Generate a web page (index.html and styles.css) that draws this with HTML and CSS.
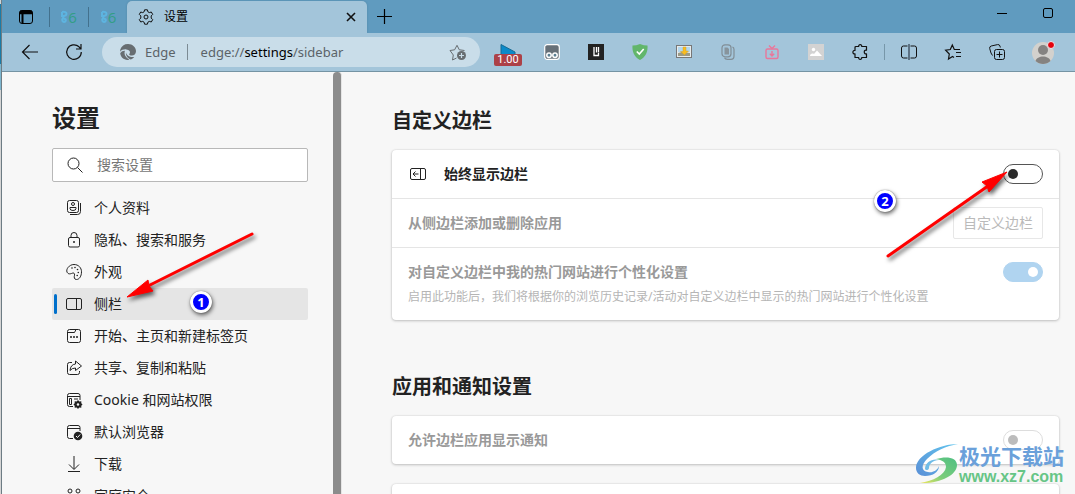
FILE: index.html
```html
<!DOCTYPE html>
<html lang="zh-CN">
<head>
<meta charset="utf-8">
<title>设置</title>
<link rel="stylesheet" href="styles.css">
</head>
<body>
<div class="edge"></div>
<div class="window">
  <header class="tabstrip">
    <button class="tab-actions" aria-label="标签操作"><svg class="i16" viewBox="0 0 16 16"><rect x="1.5" y="1.5" width="13" height="13" rx="2.5"/><path d="M1.5 3.5h13M2 2.5h12M4.5 5v9" stroke-width="2"/><path d="M2 4.5h12" stroke-width="1.5"/></svg></button>
    <button class="pinned" aria-label="固定标签 1"><svg width="7" height="12" viewBox="0 0 7 12"><path d="M1 1v5M1 1c6-1 6 4 0 4M2 7c-2 2 0 4 1 4s3-2 1-3-3 0-1-2"/></svg><span>6</span></button>
    <button class="pinned" aria-label="固定标签 2"><svg width="7" height="12" viewBox="0 0 7 12"><path d="M1 1v5M1 1c6-1 6 4 0 4M2 7c-2 2 0 4 1 4s3-2 1-3-3 0-1-2"/></svg><span>6</span></button>
    <div class="tab">
      <svg class="i16" viewBox="0 0 16 16"><path d="M6.6.8h2.8l.5 2 1.4.8 2-.6 1.4 2.4-1.5 1.5v2.2l1.5 1.5-1.4 2.4-2-.6-1.4.8-.5 2H6.6l-.5-2-1.4-.8-2 .6-1.4-2.4 1.5-1.5V6.900L1.300 5.400 2.700 3l2 .6 1.400-.8z" stroke-linejoin="round"/><circle cx="8" cy="8" r="2"/></svg>
      <span class="tab-title">设置</span>
      <button class="tab-close" aria-label="关闭标签"><svg width="10" height="10" viewBox="0 0 10 10"><path d="M1 1l8 8M9 1L1 9" stroke-width="1.6"/></svg></button>
    </div>
    <button class="new-tab" aria-label="新建标签"><svg width="15" height="15" viewBox="0 0 15 15"><path d="M7.500 0v15M0 7.500h15" stroke-width="1.200"/></svg></button>
    <div class="win-controls">
      <button aria-label="最小化"><svg width="10" height="10" viewBox="0 0 10 10"><path d="M0 5.500h10"/></svg></button>
      <button aria-label="最大化"><svg width="10" height="10" viewBox="0 0 10 10"><rect x=".5" y=".5" width="9" height="9" rx="1.500"/></svg></button>
    </div>
  </header>

  <div class="toolbar">
    <button class="tool" aria-label="后退"><svg class="i16" viewBox="0 0 16 16"><path d="M.5 8H16M7.500 1L.5 8l7 7" stroke-width="1.200"/></svg></button>
    <button class="tool" aria-label="刷新"><svg class="i16" viewBox="0 0 16 16"><path d="M15.300 8A7.300 7.300 0 1 1 13 2.800L14.500 4.500M15 0v5h-5" stroke-width="1.200"/></svg></button>
    <div class="address">
      <svg class="i16" viewBox="0 0 16 16"><g class="solid grey"><path d="M.3 5.500C1.400 2 4.300 0 8 0c4.600 0 8 3.400 8 7.300 0 2.600-1.900 4.300-4.200 4.300-2 0-3-.8-2.500-1.600 1.800-2.300-.1-4.500-3-4.600C3.700 5.200 1.500 6 .1 7.800z"/><path d="M.2 9.300c.9-1.700 2.600-2.500 4.800-2.500-1.200 2.500-.2 6.200 4.300 8.900C4.500 16.800.6 13.500.2 9.300z"/><path d="M6 8.600c.5 3 3.800 5 8.200 4.400-1.200 1.500-2.700 2.400-3.500 2.500C7.500 14.400 5.400 11.300 6 8.600z"/></g></svg>
      <span class="origin">Edge</span>
      <span class="url">edge://<b>settings</b>/sidebar</span>
      <button class="fav" aria-label="添加到收藏夹"><svg width="18" height="18" viewBox="0 0 18 18"><path class="grey-line" d="M7.500 15l-4 2 .8-5L1 7.500l4.600-.7L8 2.300l2.300 4.500 5.200.7"/><circle class="solid grey" cx="12.500" cy="12.500" r="4.500"/><path class="pale-line" d="M12.500 10v5M10 12.500h5" stroke-width="1.200"/></svg></button>
    </div>
    <div class="tools">
      <button class="tool speed" aria-label="视频速度"><svg width="16" height="12" viewBox="0 0 16 12"><path d="M1 .5L15 8v4H1z" fill="#0b8ac9" stroke="#176b93"/></svg><span>1.00</span></button>
      <button class="tool" aria-label="脚本管理器"><svg class="i16" viewBox="0 0 16 16"><rect x=".7" y=".7" width="14.600" height="14.600" rx="2.500" fill="#667078" stroke="#fff" stroke-width="1.200"/><g fill="#5b7f92" stroke="#fff" stroke-width="1.500"><circle cx="5" cy="11.300" r="2.200"/><circle cx="11" cy="11.300" r="2.200"/></g></svg></button>
      <button class="tool" aria-label="阅读列表"><svg class="i16" viewBox="0 0 16 16"><rect width="16" height="16" fill="#222" stroke="none"/><path d="M6 3v8.500h4.500V9M8.500 3v5.500M10.500 3v5.500" stroke="#fff" stroke-width="1.300"/></svg></button>
      <button class="tool" aria-label="广告防护"><svg class="i16" viewBox="0 0 16 16"><path d="M8 0c2.500 1 5 1.500 7.500 1.500C16 7 14 13 8 16 2 13 0 7 .5 1.500 3 1.500 5.500 1 8 0z" fill="#62b66b" stroke="none"/><path d="M4.800 7.500L7.300 10l4.400-5" stroke="#fff" stroke-width="1.600"/></svg></button>
      <button class="tool" aria-label="图片下载"><svg class="i16" viewBox="0 0 16 16"><rect x=".5" y="1.500" width="15" height="12" fill="#e8ecec" stroke="#777"/><path d="M2 3h12v5H2z" fill="#b4d8ee" stroke="none"/><path d="M2 12V9l4-1 8 1v3z" fill="#9b9a86" stroke="none"/><path d="M7 3h3v4h2.500L8.500 11 4.500 7.500H7z" fill="#f9bd20" stroke="#c99a27" stroke-width=".4"/></svg></button>
      <button class="tool" aria-label="复制"><svg class="i16" viewBox="0 0 16 16"><g stroke="#818e96" stroke-width="1.200"><rect x="2" y=".8" width="9" height="12" rx="3"/><path d="M12.500 3c1.200.4 1.500 1.200 1.500 2.500V12c0 2-1 3.300-3 3.300H7.500c-1.500 0-2.500-.4-3-1.500"/></g><path d="M4.500 3.500h3l1.500 1.500v5.500H4.500z" fill="#87949c" stroke="none"/></svg></button>
      <button class="tool" aria-label="视频下载"><svg class="i16" viewBox="0 0 16 16"><g stroke="#e9779b" stroke-width="1.400"><rect x="2" y="5" width="12" height="9.500" rx="1.500"/><path d="M5 1.500L8 4.500l3-3M8 7v5M5.800 9.800L8 12l2.200-2.200"/></g></svg></button>
      <button class="tool" aria-label="图片"><svg class="i16" viewBox="0 0 16 16"><rect width="16" height="16" fill="#d3d3d3" stroke="none"/><circle cx="5.500" cy="5.500" r="1.700" fill="#fff" stroke="none"/><path d="M2 12c0-2 2-3 4-2l3-3.500 5 5.500z" fill="#fff" stroke="none"/></svg></button>
      <button class="tool" aria-label="扩展"><svg class="i16" viewBox="0 0 16 16"><path d="M4 2.500h2.700c-.6-2.600 3.600-2.600 3 0H14.500v3.700c-3-.8-3 4.400 0 3.600v3.700H9.700c.6 2.600-3.600 2.600-3 0H3V9.800C.2 10.400.2 5.900 3 6.400V3.500q0-1 1-1z" stroke-width="1.200" stroke-linejoin="round"/></svg></button>
      <span class="divider"></span>
      <button class="tool" aria-label="拆分屏幕"><svg class="i16" viewBox="0 0 16 16"><path d="M6.500 2h-4Q.5 2 .5 4v8q0 2 2 2h4M9.500 2h4q2 0 2 2v8q0 2-2 2h-4"/><path d="M8 0v16" stroke="#456" stroke-width="1.500"/></svg></button>
      <button class="tool" aria-label="收藏夹"><svg class="i16" viewBox="0 0 16 16"><path d="M9 13.500l-1.500-1L3.500 15l.8-5L.6 6.200l4.700-.7L7.300 1l2 4.500H15M11 8.500h5M11 12.500h5" stroke-width="1.200"/></svg></button>
      <button class="tool" aria-label="集锦"><svg class="i16" viewBox="0 0 16 16"><rect x="5.500" y="5.500" width="10" height="10" rx="2"/><path d="M3.500 11.500L2 9 .7 4.500Q.3 2.500 2.200 2L8.500.6q2-.4 2.500 1.500l.3 1.400M10.500 7.500v6M7.500 10.500h6"/></svg></button>
      <button class="tool avatar" aria-label="个人资料"><svg width="22" height="24" viewBox="0 0 22 24"><circle cx="11" cy="13" r="11" fill="#d3d1cd" stroke="none"/><circle cx="11" cy="10" r="5" fill="#858381" stroke="none"/><path d="M3.500 21c1.500-6 13.500-6 15 0-4 4-11 4-15 0z" fill="#858381" stroke="none"/><circle cx="19" cy="5" r="3.500" fill="#e5000b" stroke="#e5edf2"/></svg></button>
    </div>
  </div>

  <div class="page">
    <aside class="sidebar">
      <h1>设置</h1>
      <label class="search"><svg class="i16" viewBox="0 0 16 16"><circle cx="6.500" cy="6.500" r="5.500"/><path d="M10.500 10.500L15.500 15.500"/></svg><input type="search" placeholder="搜索设置" aria-label="搜索设置"></label>
      <nav>
        <a href="#profile"><svg class="i16" viewBox="0 0 16 16"><rect x="1.500" y=".5" width="11" height="12" rx="2"/><circle cx="7" cy="4" r="1.500"/><path d="M4 7.500h6v1q0 2-3 2t-3-2zM14.500 3v8.500q0 3-3 3H4"/></svg>个人资料</a>
        <a href="#privacy"><svg class="i16" viewBox="0 0 16 16"><rect x="2.500" y="5.500" width="11" height="9.500" rx="1.500"/><path d="M5 5.500v-2Q5 .5 8 .5t3 3v2"/><circle class="solid" cx="8" cy="10" r="1"/></svg>隐私、搜索和服务</a>
        <a href="#appearance"><svg class="i16" viewBox="0 0 16 16"><path d="M1 8C-.2 5.500 3 .5 8 .5c4.500 0 7.500 3.300 7.500 7.300 0 4.400-2.200 7.700-5 7.700-2.400 0-2.600-2.300-2-4.300.4-1.700-.8-2.700-2.300-2C4.500 10 2 10.500 1 8z"/><g class="solid"><circle cx="6" cy="4" r=".8"/><circle cx="9" cy="3.500" r=".8"/><circle cx="11.500" cy="5.500" r=".8"/><circle cx="12.300" cy="8.500" r=".8"/><circle cx="11.200" cy="11.500" r=".8"/></g></svg>外观</a>
        <a href="#sidebar" class="current" aria-current="page"><svg class="i16" viewBox="0 0 16 16"><rect x=".5" y="2.500" width="15" height="11" rx="1.500"/><path d="M10.500 2.500v11"/></svg>侧栏</a>
        <a href="#start"><svg class="i16" viewBox="0 0 16 16"><rect x="1.500" y="1.500" width="13" height="13" rx="2"/><path d="M1.500 4.500h7l1.500-3"/><path d="M4 9h2M7 9h2M10 9h2" stroke-width="1.500"/></svg>开始、主页和新建标签页</a>
        <a href="#share"><svg class="i16" viewBox="0 0 16 16"><path d="M6 2.500H3.500q-2 0-2 2v8q0 2 2 2h8q2 0 2-2V11"/><path d="M9.500 1l6 5-6 4.500V8Q6 8 4 10.500q.5-6 5.500-6.500z" stroke-linejoin="round"/></svg>共享、复制和粘贴</a>
        <a href="#cookies"><svg class="i16" viewBox="0 0 16 16"><path d="M7 14.500H3.500q-2 0-2-2v-9q0-2 2-2h8.500q2 0 2 2V8M1.500 4.500H14M3.500 6.500h2v6h-2zM8 7h4"/><path class="solid" d="M12 8l1.300 1.400 2-.2v2.100l1.200 1.200-1.200 1.200v2l-2-.2L12 17l-1.300-1.500-2 .2v-2l-1.200-1.200 1.200-1.200V9.200l2 .2z"/><circle cx="12" cy="12.500" r="1.200" fill="#f7f7f7" stroke="none"/></svg>Cookie 和网站权限</a>
        <a href="#default"><svg class="i16" viewBox="0 0 16 16"><path d="M7 14.500H3.500q-2 0-2-2v-9q0-2 2-2h8.500q2 0 2 2V7M1.500 4.500H14"/><circle class="solid" cx="12" cy="12" r="4.300"/><path d="M10 12l1.500 1.500 2.700-3" stroke="#f7f7f7"/></svg>默认浏览器</a>
        <a href="#downloads"><svg class="i16" viewBox="0 0 16 16"><path d="M8 0v13M3 8.500L8 13.500l5-5M2 15.500h12"/></svg>下载</a>
        <a href="#family"><svg class="i16" viewBox="0 0 16 16"><circle cx="4" cy="3" r="2"/><circle cx="12" cy="3" r="2"/><circle cx="8" cy="9" r="1.800"/><path d="M.5 11V8q0-1.500 1.500-1.500h3M15.500 11V8q0-1.500-1.500-1.500h-3M4 15q0-3 4-3t4 3"/></svg>家庭安全</a>
      </nav>
    </aside>
    <div class="scrollbar"></div>

    <main>
      <h2>自定义边栏</h2>
      <section class="card">
        <div class="row">
          <svg class="row-icon" width="20" height="20" viewBox="0 0 20 20"><rect x="2.500" y="4.500" width="15" height="11" rx="1.500"/><path d="M12.500 4.500v11M10.500 10H5M7.500 7.500L5 10l2.500 2.500"/></svg>
          <label for="always">始终显示边栏</label>
          <input class="switch" id="always" type="checkbox">
        </div>
        <div class="row muted">
          <span class="label">从侧边栏添加或删除应用</span>
          <button class="outline" disabled>自定义边栏</button>
        </div>
        <div class="row tall muted">
          <div class="text"><label for="personal">对自定义边栏中我的热门网站进行个性化设置</label><p>启用此功能后，我们将根据你的浏览历史记录/活动对自定义边栏中显示的热门网站进行个性化设置</p></div>
          <input class="switch" id="personal" type="checkbox" checked disabled>
        </div>
      </section>
      <h2>应用和通知设置</h2>
      <section class="card">
        <div class="row muted">
          <label for="notify">允许边栏应用显示通知</label>
          <input class="switch" id="notify" type="checkbox" disabled>
        </div>
      </section>
      <section class="card"><div class="row"></div></section>
    </main>
  </div>
</div>

<svg class="arrow arrow-one" width="140" height="80" viewBox="0 0 140 80"><path class="shaft" d="M132 14L30 65"/><path class="head" d="M7 77L28 60 29 66 33 71z"/></svg>
<span class="step step-one">1</span>
<svg class="arrow arrow-two" width="140" height="100" viewBox="0 0 140 100"><path class="shaft" d="M8 95L108 25"/><path class="head" d="M127 11L102 21 107 25 109 31z"/></svg>
<span class="step step-two">2</span>

<div class="watermark">
  <svg width="44" height="42" viewBox="0 0 44 42">
    <defs>
      <linearGradient id="sky" x1="1" y1="0" x2="0" y2="1"><stop offset="0" stop-color="#62c5ee"/><stop offset="1" stop-color="#5a8fd6"/></linearGradient>
      <linearGradient id="leaf" x1="1" y1="0" x2="0" y2="1"><stop offset="0" stop-color="#4fbf83"/><stop offset=".6" stop-color="#7ccd7b"/><stop offset="1" stop-color="#f3e85c"/></linearGradient>
    </defs>
    <path d="M43 1C25 1 1 12 1 25c0 5 4 8 9 8 8 0 14-4 14-10-2 5-7 7-11 6-7-1-7-7-1-13C20 8 31 3 43 1z" fill="url(#sky)"/>
    <path d="M10 26c0-7 8-11 14-9-6 0-10 4-10 8 0 2-3 3-4 1z" fill="#70bce7"/>
    <path d="M21 16c10-3 21-2 21 6 0 10-17 19-37 18 13-2 25-8 26-16 0-5-4-7-10-8z" fill="url(#leaf)"/>
  </svg>
  <div class="mark-text"><strong>极光下载站</strong><span>www.xz7.com</span></div>
</div>
</body>
</html>
```

FILE: styles.css
```css
* { box-sizing: border-box; }
body {
  margin: 0;
  height: 100vh;
  display: flex;
  position: relative;
  overflow: hidden;
  background: #f7f7f7;
  color: #222;
  font: 14px/20px "Noto Sans", "Noto Sans CJK SC", sans-serif;
}
h1, h2, p { margin: 0; }
button { margin: 0; padding: 0; border: 0; background: none; color: inherit; font: inherit; }
svg { flex: none; fill: none; stroke: currentColor; overflow: visible; }
.i16 { width: 16px; height: 16px; }
.solid { fill: currentColor; stroke: none; }
.grey { fill: #676d71; }
.grey-line { stroke: #676d71; }
.pale-line { stroke: #c9dde9; }

.edge {
  flex: none;
  width: 2px;
  border-right: 1px solid #6d7c84;
  background: linear-gradient(#cfd5d8 4px, #197ba7 4px 64px, #7db6cf 64px 90px, #d5d5d5 90px);
}
.window { flex: 1; min-width: 0; display: flex; flex-direction: column; }

.tabstrip { flex: none; display: flex; align-items: center; height: 33px; background: #609bbf; color: #111; }
.tab-actions, .pinned { display: grid; place-items: center; height: 20px; border-right: 1px solid #43718d; }
.tab-actions { width: 48px; color: #000; }
.pinned { width: 39px; display: flex; align-items: center; justify-content: center; gap: 0; color: #5db4e0; }
.pinned svg { stroke-width: 2; }
.pinned span { color: #329e86; font: 15px/16px "Open Sans", sans-serif; }
.pinned + .pinned { border: 0; }
.tab {
  display: flex;
  align-items: center;
  align-self: flex-end;
  width: 240px;
  height: 32px;
  margin-left: -1px;
  padding: 0 10px 0 11px;
  gap: 10px;
  border-radius: 5px 5px 0 0;
  background: #a3c5da;
  box-shadow: 0 0 2px #39688377;
}
.tab-title { flex: 1; color: #000; font-size: 12px; }
.tab-close { display: grid; place-items: center; width: 12px; height: 16px; }
.new-tab { display: grid; place-items: center; width: 35px; height: 32px; color: #000; }
.win-controls { display: flex; margin-left: auto; align-self: flex-start; padding-right: 4px; }
.win-controls button { display: grid; place-items: center; width: 46px; height: 26px; color: #000; }

.toolbar { flex: none; display: flex; align-items: center; height: 39px; padding: 0 8px 0 6px; border-bottom: 1px solid #7594a4; background: #a3c5da; color: #111; }
.tool { display: grid; place-items: center; width: 44px; height: 36px; }
.address { flex: 1; min-width: 0; display: flex; align-items: center; height: 30px; margin: 0 6px; padding: 0 13px 0 18px; border-radius: 15px; background: #c9dde9; color: #5b6368; font-size: 13px; }
.origin { margin-left: 9px; padding-right: 11px; border-right: 1px solid #7c8b94; line-height: 16px; }
.url { flex: 1; min-width: 0; margin-left: 13px; }
.url b { color: #000; font-weight: 400; }
.fav { display: grid; place-items: center; }
.tools { display: flex; align-items: center; }
.speed { align-content: center; padding-top: 6px; }
.speed span { margin-top: -2px; padding: 0 3px; border-radius: 2px; background: #ac4147; color: #fff; font: 11px/12px Roboto, sans-serif; z-index: 1; }
.divider { width: 1px; height: 16px; margin: 0 2px; background: #7797a9; }
.avatar { width: 48px; }

.page { flex: 1; min-height: 0; display: flex; overflow: hidden; }
.sidebar { flex: none; width: 331px; padding: 30px 25px 0 50px; overflow: hidden; }
.sidebar h1 { font-size: 24px; line-height: 32px; }
.search { display: flex; align-items: center; height: 34px; margin-top: 14px; padding: 0 14px; gap: 14px; border: 1px solid #b8b8b8; border-radius: 2px; background: #fff; }
.search input { flex: 1; min-width: 0; padding: 0; border: 0; outline: 0; background: none; color: #222; font: inherit; }
.search input::placeholder { color: #767676; }
nav { margin-top: 10px; }
nav a { display: flex; align-items: center; height: 32px; padding-left: 14px; gap: 12px; border-radius: 2px; color: #222; text-decoration: none; }
nav .current { padding-left: 2px; background: #e5e5e5; }
nav .current::before { content: ""; width: 3px; height: 20px; margin-right: -3px; border-radius: 2px; background: #0070cb; }
.scrollbar { flex: none; width: 9px; border-right: 1px solid #e5e5e5; border-radius: 4px 4px 0 0; background: #8c8c8c; }

main { flex: 1; min-width: 0; padding: 33px 16px 0 50px; overflow: hidden; }
h2 { font-size: 20px; line-height: 32px; }
.card { margin-top: 13px; border-radius: 4px; background: #fff; box-shadow: 0 1px 3px #0003, 0 0 2px #0002; }
.card + h2 { margin-top: 51px; }
.card + .card { margin-top: 20px; }
.row { display: flex; align-items: center; min-height: 48px; padding: 0 16px; }
.row + .row { border-top: 1px solid #e5e5e5; min-height: 49px; }
.row label, .label { font-weight: 600; }
.row-icon { margin-right: 16px; }
.row.tall { min-height: 73px; align-items: flex-start; padding-top: 14px; }
.muted { color: #999; }
.text label { display: block; }
.text p { margin-top: 6px; color: #b5b5b5; font-size: 12px; line-height: 18px; }
.outline { height: 32px; margin-left: auto; padding: 0 9px; border: 1px solid #e7e7e7; border-radius: 2px; color: #bababa; }
.switch { appearance: none; flex: none; display: flex; align-items: center; width: 40px; height: 20px; margin: 0 0 0 auto; padding: 0 4px; border: 1px solid #555; border-radius: 10px; }
.switch::before { content: ""; width: 10px; height: 10px; border-radius: 50%; background: #2b2b2b; }
.switch:disabled { border-color: #ddd; }
.switch:disabled::before { background: #bcbcbc; }
.switch:checked { justify-content: flex-end; border-color: #b0d4f0; background: #b0d4f0; }
.switch:checked::before { background: #fff; }

/* Tutorial marks laid over the window */
.arrow, .step, .watermark { position: absolute; pointer-events: none; }
.arrow { filter: drop-shadow(2px 3px 2px #0009); }
.shaft { stroke: #f00; stroke-width: 3; stroke-linecap: round; }
.head { fill: #f00; stroke: #f00; stroke-width: 1; }
.arrow-one { left: 120px; top: 220px; }
.arrow-two { right: 55px; top: 161px; }
.step { display: grid; place-items: center; width: 22px; height: 22px; border: 3px solid #fff; border-radius: 50%; background: #00f; color: #fff; font: bold 13px/16px "Noto Sans", sans-serif; box-shadow: 1px 2px 4px #0009, 0 0 1px #0009; }
.step-one { left: 190px; top: 291px; }
.step-two { right: 179px; top: 190px; }
.watermark { right: 11px; top: 443px; display: flex; align-items: flex-start; }
.watermark svg { stroke: none; }
.mark-text { display: flex; flex-direction: column; }
.mark-text strong { color: #6aa0da; font: bold 21px/24px "Noto Sans CJK SC", sans-serif; }
.mark-text span { color: #66c586; font: bold 16px/20px "Liberation Sans", sans-serif; }
```
